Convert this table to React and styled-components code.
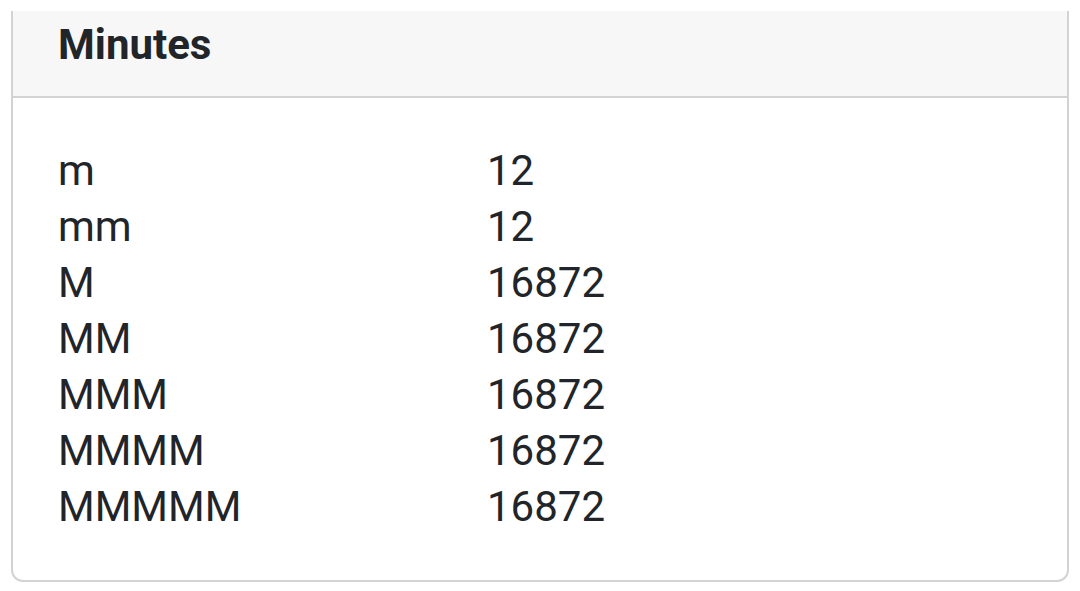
import React from "react";
import styled, { createGlobalStyle } from "styled-components";

const GlobalStyle = createGlobalStyle`
  html, body {
    margin: 0;
    padding: 0;
    background: #ffffff;
  }
  body {
    font-family: Roboto, "Liberation Sans", sans-serif;
    color: #212529;
  }
`;

const Page = styled.div`
  padding: 11px 11px 9px 11px;
`;

const Card = styled.section`
  border: 2px solid #d3d3d3;
  border-top: none;
  border-radius: 0 0 12px 12px;
  background: #ffffff;
`;

const CardHeader = styled.header`
  background: #f7f7f7;
  border-bottom: 2px solid #d3d3d3;
  padding: 6px 45px 23px;
`;

const Title = styled.h2`
  margin: 0;
  font-size: 42px;
  line-height: 56px;
  font-weight: 700;
`;

const CardBody = styled.div`
  padding: 45px 45px 45px;
`;

const Table = styled.div`
  display: grid;
  grid-template-columns: 429px 1fr;
`;

const Cell = styled.div`
  font-size: 42px;
  line-height: 56px;
  font-weight: 400;
`;

const rows = [
  ["m", "12"],
  ["mm", "12"],
  ["M", "16872"],
  ["MM", "16872"],
  ["MMM", "16872"],
  ["MMMM", "16872"],
  ["MMMMM", "16872"],
];

export default function App() {
  return (
    <Page>
      <GlobalStyle />
      <Card>
        <CardHeader>
          <Title>Minutes</Title>
        </CardHeader>
        <CardBody>
          <Table>
            {rows.map(([token, value]) => (
              <React.Fragment key={token}>
                <Cell>{token}</Cell>
                <Cell>{value}</Cell>
              </React.Fragment>
            ))}
          </Table>
        </CardBody>
      </Card>
    </Page>
  );
}
